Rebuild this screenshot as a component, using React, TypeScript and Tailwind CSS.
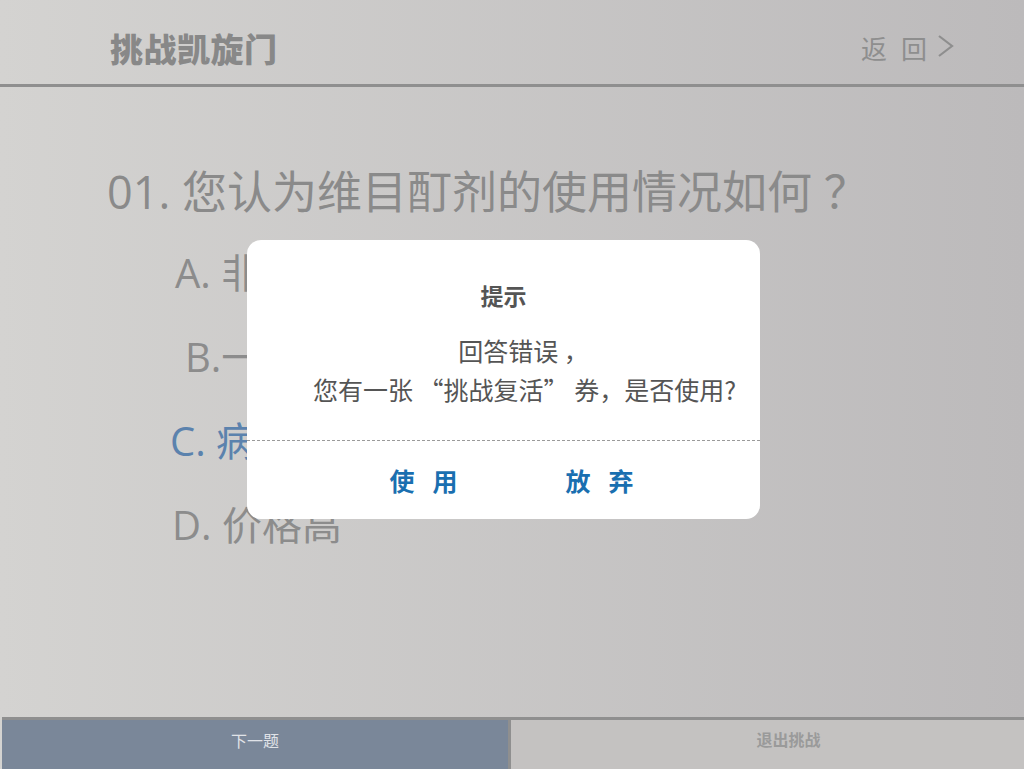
import React from 'react';

const options = [
  { key: 'A', label: 'A. 非常好', className: 'pl-[175px] text-[#8c8c8c]' },
  { key: 'B', label: 'B.一般', className: 'pl-[185px] text-[#8c8c8c]' },
  { key: 'C', label: 'C. 病人反馈好', className: 'pl-[170px] text-[#5b82ad]' },
  { key: 'D', label: 'D. 价格高', className: 'pl-[172px] text-[#8c8c8c]' },
];

const App: React.FC = () => {
  return (
    <div
      className="relative w-[1024px] h-[769px] overflow-hidden flex flex-col bg-gradient-to-r from-[#d4d3d1] to-[#bcbabb]"
      style={{ fontFamily: '"Open Sans", "Noto Sans CJK SC", sans-serif' }}
    >
      {/* Header */}
      <div className="h-[87px] shrink-0 flex items-center justify-between pl-[110px] pr-[70px] pt-[14px] border-b-[3px] border-[#8f8f8f]">
        <h1
          className="text-[33px] font-black text-[#888888] tracking-[0.5px]"
          style={{ fontFamily: '"Noto Sans CJK SC", sans-serif' }}
        >
          挑战凯旋门
        </h1>
        <button className="flex items-center gap-[14px] text-[26px] text-[#8e8e8e]">
          <span>返</span>
          <span>回</span>
          <svg width="17" height="26" viewBox="0 0 17 26" className="-ml-[4px] mb-[6px]">
            <path d="M2 3 L15 13 L2 23" fill="none" stroke="#8e8e8e" strokeWidth="2.2" />
          </svg>
        </button>
      </div>

      {/* Question */}
      <div className="flex-1">
        <div className="pl-[107px] pt-[75px] text-[45px] leading-[60px] text-[#8a8a8a] whitespace-pre">
          01. 您认为维目酊剂的使用情况如何 ？
        </div>
        <div className="flex flex-col pt-[9px]">
          {options.map(o => (
            <div key={o.key} className={`h-[84px] flex items-center text-[40px] ${o.className}`}>
              {o.label}
            </div>
          ))}
        </div>
      </div>

      {/* Bottom bar */}
      <div className="h-[52px] shrink-0 flex border-t-[3px] border-[#8f8f8f] ml-[2px]">
        <button className="w-[506px] bg-[#7a8799] text-[16px] text-[#e0e3e8] pb-[7px]">下一题</button>
        <div className="w-[3px] bg-[#8f8f8f]" />
        <button className="flex-1 bg-[#c4c2c1] text-[16px] font-semibold text-[#9a9a9a] pb-[10px] pl-[42px]">
          退出挑战
        </button>
      </div>

      {/* Dialog */}
      <div
        className="absolute left-[247px] top-[240px] w-[513px] h-[279px] bg-white rounded-[14px] flex flex-col"
        style={{ fontFamily: '"Noto Sans CJK SC", sans-serif' }}
      >
        <div className="h-[201px] flex flex-col items-center border-b border-dashed border-[#9a9a9a]">
          <div className="pt-[38px] text-[23px] font-bold text-[#555555]">提示</div>
          <div className="pt-[18px] pl-[42px] text-[25px] text-[#555555] leading-[39px] text-center whitespace-pre">
            <div className="pr-[2px]">回答错误 ，</div>
            <div>您有一张 “挑战复活” 券，是否使用?</div>
          </div>
        </div>
        <div className="flex-1 flex items-center justify-center gap-[108px] pl-[16px] pt-[2px] text-[25px] font-bold text-[#1a6fb0]">
          <button className="flex gap-[18px]">
            <span>使</span>
            <span>用</span>
          </button>
          <button className="flex gap-[18px]">
            <span>放</span>
            <span>弃</span>
          </button>
        </div>
      </div>
    </div>
  );
};

export default App;
